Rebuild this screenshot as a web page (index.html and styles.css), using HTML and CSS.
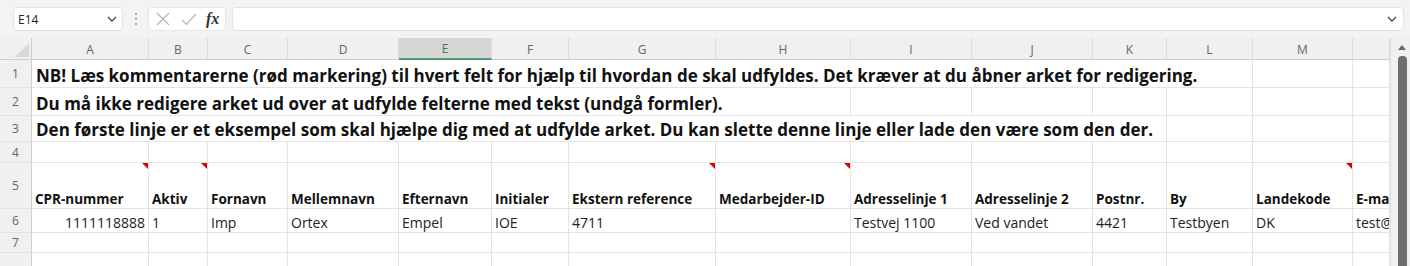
FILE: index.html
```html
<!DOCTYPE html>
<html lang="da">
<head>
<meta charset="utf-8">
<title>Excel</title>
<link rel="stylesheet" href="styles.css">
</head>
<body>
<div class="app">
  <div class="fbar">
    <div class="namebox">
      <span class="namebox-text">E14</span>
      <svg class="chev" width="10" height="6" viewBox="0 0 10 6"><path d="M1 1 L5 5 L9 1" fill="none" stroke="#444" stroke-width="1.3"/></svg>
    </div>
    <div class="grip">
      <svg width="4" height="14" viewBox="0 0 4 14"><circle cx="2" cy="2" r="1.1" fill="#999"/><circle cx="2" cy="7" r="1.1" fill="#999"/><circle cx="2" cy="12" r="1.1" fill="#999"/></svg>
    </div>
    <div class="fbtns">
      <svg width="14" height="14" viewBox="0 0 14 14"><path d="M1 1 L13 13 M13 1 L1 13" stroke="#b4b4b4" stroke-width="1.2" fill="none"/></svg>
      <svg width="16" height="13" viewBox="0 0 16 13"><path d="M1 7 L5.5 11.5 L15 1" stroke="#b4b4b4" stroke-width="1.2" fill="none"/></svg>
      <span class="fx">fx</span>
    </div>
    <div class="finput">
      <svg class="chev" width="10" height="6" viewBox="0 0 10 6"><path d="M1 1 L5 5 L9 1" fill="none" stroke="#444" stroke-width="1.3"/></svg>
    </div>
  </div>
  <div class="sheet">
    <div class="grid">
      <div class="corner"><span class="tri"></span></div>
      <div class="h">A</div><div class="h">B</div><div class="h">C</div><div class="h">D</div>
      <div class="h sel">E</div><div class="h">F</div><div class="h">G</div><div class="h">H</div>
      <div class="h">I</div><div class="h">J</div><div class="h">K</div><div class="h">L</div>
      <div class="h">M</div><div class="h"></div>

      <div class="rn">1</div>
      <div class="c big span-l">NB! Læs kommentarerne (rød markering) til hvert felt for hjælp til hvordan de skal udfyldes. Det kræver at du åbner arket for redigering.</div>
      <div class="c"></div><div class="c"></div>

      <div class="rn">2</div>
      <div class="c big span-h">Du må ikke redigere arket ud over at udfylde felterne med tekst (undgå formler).</div>
      <div class="c"></div><div class="c"></div><div class="c"></div><div class="c"></div><div class="c"></div><div class="c"></div>

      <div class="rn">3</div>
      <div class="c big span-k">Den første linje er et eksempel som skal hjælpe dig med at udfylde arket. Du kan slette denne linje eller lade den være som den der.</div>
      <div class="c"></div><div class="c"></div><div class="c"></div>

      <div class="rn">4</div>
      <div class="c"></div><div class="c"></div><div class="c"></div><div class="c"></div><div class="c"></div><div class="c"></div><div class="c"></div>
      <div class="c"></div><div class="c"></div><div class="c"></div><div class="c"></div><div class="c"></div><div class="c"></div><div class="c"></div>

      <div class="rn">5</div>
      <div class="c hd note">CPR-nummer</div>
      <div class="c hd note">Aktiv</div>
      <div class="c hd">Fornavn</div>
      <div class="c hd">Mellemnavn</div>
      <div class="c hd">Efternavn</div>
      <div class="c hd">Initialer</div>
      <div class="c hd note">Ekstern reference</div>
      <div class="c hd note">Medarbejder-ID</div>
      <div class="c hd">Adresselinje 1</div>
      <div class="c hd">Adresselinje 2</div>
      <div class="c hd">Postnr.</div>
      <div class="c hd">By</div>
      <div class="c hd note">Landekode</div>
      <div class="c hd clip">E-ma</div>

      <div class="rn">6</div>
      <div class="c num">1111118888</div>
      <div class="c">1</div>
      <div class="c">Imp</div>
      <div class="c">Ortex</div>
      <div class="c">Empel</div>
      <div class="c">IOE</div>
      <div class="c">4711</div>
      <div class="c"></div>
      <div class="c">Testvej 1100</div>
      <div class="c">Ved vandet</div>
      <div class="c">4421</div>
      <div class="c">Testbyen</div>
      <div class="c">DK</div>
      <div class="c clip">test@</div>

      <div class="rn">7</div>
      <div class="c"></div><div class="c"></div><div class="c"></div><div class="c"></div><div class="c"></div><div class="c"></div><div class="c"></div>
      <div class="c"></div><div class="c"></div><div class="c"></div><div class="c"></div><div class="c"></div><div class="c"></div><div class="c"></div>

      <div class="rn"></div>
      <div class="c"></div><div class="c"></div><div class="c"></div><div class="c"></div><div class="c"></div><div class="c"></div><div class="c"></div>
      <div class="c"></div><div class="c"></div><div class="c"></div><div class="c"></div><div class="c"></div><div class="c"></div><div class="c"></div>
    </div>
    <div class="vscroll">
      <span class="up"></span>
      <div class="thumb"></div>
    </div>
  </div>
</div>
</body>
</html>
```
FILE: styles.css
```css
* { box-sizing: border-box; }
html, body { margin: 0; padding: 0; }
body {
  width: 1410px;
  height: 266px;
  overflow: hidden;
  background: #f3f3f3;
  font-family: "Open Sans", "Liberation Sans", sans-serif;
}
.app { display: flex; flex-direction: column; height: 266px; }

.fbar {
  height: 38px;
  display: flex;
  align-items: flex-start;
  padding: 7px 6px 0 13px;
  background: #f3f3f3;
}
.namebox {
  width: 110px;
  height: 24px;
  background: #fff;
  border: 1px solid #e3e3e3;
  border-radius: 4px;
  display: flex;
  align-items: center;
  justify-content: space-between;
  padding: 0 5px 0 4px;
}
.namebox-text {
  font-size: 12px;
  color: #222;
}
.grip {
  width: 25px;
  height: 24px;
  display: flex;
  align-items: center;
  justify-content: center;
}
.fbtns {
  width: 78px;
  height: 24px;
  background: #fff;
  border: 1px solid #e6e6e6;
  border-radius: 4px;
  display: flex;
  align-items: center;
  gap: 11px;
  padding-left: 7px;
}
.fx {
  font-family: "Liberation Serif", serif;
  font-style: italic;
  font-weight: bold;
  font-size: 16px;
  color: #333;
  margin-left: -2px;
}
.finput {
  flex: 1;
  height: 24px;
  margin-left: 6px;
  background: #fff;
  border: 1px solid #e3e3e3;
  border-radius: 4px;
  display: flex;
  align-items: center;
  justify-content: flex-end;
  padding-right: 6px;
}

.sheet { display: flex; flex: 1; min-height: 0; }
.grid {
  display: grid;
  grid-template-columns: 32px 117px 59px 80px 111px 93px 77px 147px 135px 121px 121px 74px 86px 100px 37px;
  grid-template-rows: 22px 28px 28px 26px 21px 46px 24px 20px 20px;
  background: #fff;
  overflow: hidden;
  width: 1390px;
}
.corner {
  background: #f0f0f0;
  border-right: 1px solid #cfcfcf;
  border-bottom: 1px solid #cfcfcf;
  position: relative;
}
.tri {
  position: absolute;
  right: 2px;
  bottom: 2px;
  width: 0; height: 0;
  border-left: 14px solid transparent;
  border-bottom: 14px solid #d9d9d9;
}
.h {
  background: #f0f0f0;
  border-right: 1px solid #dcdcdc;
  border-bottom: 1px solid #cfcfcf;
  font-size: 12px;
  color: #666;
  display: flex;
  align-items: center;
  justify-content: center;
  padding-top: 1px;
}
.h.sel {
  background: #d6d6d6;
  border-bottom: 2px solid #4f9a68;
  color: #3d7a52;
}
.rn {
  background: #f0f0f0;
  border-right: 1px solid #cfcfcf;
  border-bottom: 1px solid #e2e2e2;
  font-size: 12px;
  color: #666;
  display: flex;
  align-items: center;
  justify-content: center;
}
.c {
  border-right: 1px solid #e4e4e4;
  border-bottom: 1px solid #e4e4e4;
  display: flex;
  align-items: flex-end;
  padding: 0 0 0 3px;
  font-size: 14px;
  color: #222;
  white-space: nowrap;
  overflow: visible;
  position: relative;
}
.clip { overflow: hidden; }
.big {
  font-size: 17px;
  font-weight: bold;
  color: #111;
  padding-bottom: 0;
  padding-left: 4px;
}
.span-l { grid-column: 2 / span 12; }
.span-h { grid-column: 2 / span 8; }
.span-k { grid-column: 2 / span 11; }
.hd { font-weight: bold; color: #111; font-size: 13.5px; padding-bottom: 0; }
.num { justify-content: flex-end; padding-right: 3px; }
.note::after {
  content: "";
  position: absolute;
  top: 0;
  right: 0;
  width: 0; height: 0;
  border-left: 6px solid transparent;
  border-top: 6px solid #e00000;
}

.vscroll {
  width: 20px;
  background: #f0f0f0;
  border-left: 1px solid #e0e0e0;
  display: flex;
  flex-direction: column;
  align-items: center;
  padding-top: 7px;
}
.up {
  width: 0; height: 0;
  border-left: 4px solid transparent;
  border-right: 4px solid transparent;
  border-bottom: 5px solid #6a6a6a;
  margin-left: 2px;
}
.thumb {
  margin-top: 6px;
  width: 9px;
  flex: 1;
  background: #6e6e6e;
  border-radius: 4px 4px 0 0;
  margin-left: 3px;
}
```
